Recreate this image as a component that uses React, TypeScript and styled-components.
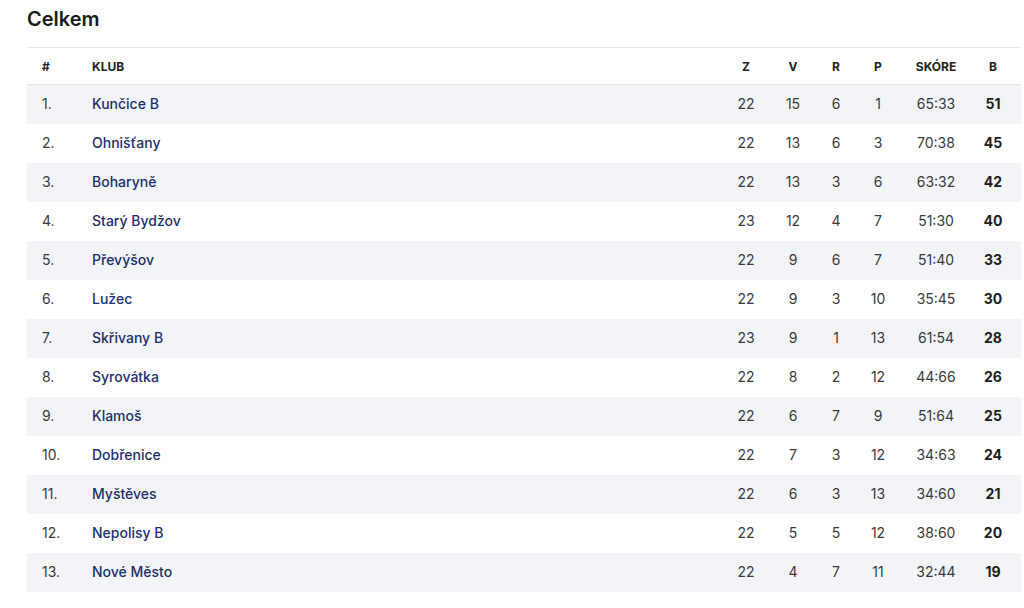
import React from "react";
import styled, { createGlobalStyle } from "styled-components";

const Global = createGlobalStyle`
  html, body { margin: 0; padding: 0; background: #fff; }
  body { font-family: Inter, "Noto Sans", sans-serif; color: #222; }
`;

const Page = styled.div`
  padding: 7px 3px 0 27px;
`;

const Title = styled.h2`
  margin: 0 0 16px;
  font-size: 20px;
  line-height: 24px;
  font-weight: 600;
  color: #1b1b1b;
  letter-spacing: 0;
`;

const Table = styled.div`
  width: 994px;
  border-top: 1px solid #e4e6ea;
`;

const cols = "65px 1fr 42px 52px 34px 50px 66px 52px";

const HeadRow = styled.div`
  display: grid;
  grid-template-columns: ${cols};
  height: 36px;
  align-items: center;
  border-bottom: 1px solid #e4e6ea;
`;

const Row = styled.div<{ $striped: boolean }>`
  display: grid;
  grid-template-columns: ${cols};
  height: 39px;
  align-items: center;
  background: ${(p) => (p.$striped ? "#f2f4f7" : "#fff")};
`;

const HeadCell = styled.div<{ $center?: boolean; $flush?: boolean; $last?: boolean }>`
  font-size: 12px;
  font-weight: 700;
  color: #222;
  text-transform: uppercase;
  text-align: ${(p) => (p.$center ? "center" : "left")};
  padding-left: ${(p) => (p.$center || p.$flush ? "0" : "15px")};
  padding-right: ${(p) => (p.$last ? "4px" : "0")};
`;

const Cell = styled.div<{ $center?: boolean; $bold?: boolean }>`
  font-size: 14px;
  line-height: 18px;
  margin-top: -2px;
  font-weight: ${(p) => (p.$bold ? 700 : 400)};
  color: ${(p) => (p.$bold ? "#1e1e1e" : "#3a3a3a")};
  text-align: ${(p) => (p.$center ? "center" : "left")};
  padding-left: ${(p) => (p.$center ? "0" : "15px")};
  padding-right: ${(p) => (p.$bold ? "4px" : "0")};
`;

const ClubCell = styled.div`
  margin-top: -2px;
  line-height: 18px;
`;

const ClubLink = styled.a`
  font-size: 14px;
  font-weight: 500;
  color: #1d2f6b;
  text-decoration: none;
`;

const data: [string, number, number, number, number, string, number][] = [
  ["Kunčice B", 22, 15, 6, 1, "65:33", 51],
  ["Ohnišťany", 22, 13, 6, 3, "70:38", 45],
  ["Boharyně", 22, 13, 3, 6, "63:32", 42],
  ["Starý Bydžov", 23, 12, 4, 7, "51:30", 40],
  ["Převýšov", 22, 9, 6, 7, "51:40", 33],
  ["Lužec", 22, 9, 3, 10, "35:45", 30],
  ["Skřivany B", 23, 9, 1, 13, "61:54", 28],
  ["Syrovátka", 22, 8, 2, 12, "44:66", 26],
  ["Klamoš", 22, 6, 7, 9, "51:64", 25],
  ["Dobřenice", 22, 7, 3, 12, "34:63", 24],
  ["Myštěves", 22, 6, 3, 13, "34:60", 21],
  ["Nepolisy B", 22, 5, 5, 12, "38:60", 20],
  ["Nové Město", 22, 4, 7, 11, "32:44", 19],
];

export default function App() {
  return (
    <>
      <Global />
      <Page>
        <Title>Celkem</Title>
        <Table>
          <HeadRow>
            <HeadCell>#</HeadCell>
            <HeadCell $flush>Klub</HeadCell>
            <HeadCell $center>Z</HeadCell>
            <HeadCell $center>V</HeadCell>
            <HeadCell $center>R</HeadCell>
            <HeadCell $center>P</HeadCell>
            <HeadCell $center>Skóre</HeadCell>
            <HeadCell $center $last>B</HeadCell>
          </HeadRow>
          {data.map((r, i) => (
            <Row key={r[0]} $striped={i % 2 === 0}>
              <Cell>{i + 1}.</Cell>
              <ClubCell>
                <ClubLink href="#">{r[0]}</ClubLink>
              </ClubCell>
              <Cell $center>{r[1]}</Cell>
              <Cell $center>{r[2]}</Cell>
              <Cell $center>{r[3]}</Cell>
              <Cell $center>{r[4]}</Cell>
              <Cell $center>{r[5]}</Cell>
              <Cell $center $bold>{r[6]}</Cell>
            </Row>
          ))}
        </Table>
      </Page>
    </>
  );
}
